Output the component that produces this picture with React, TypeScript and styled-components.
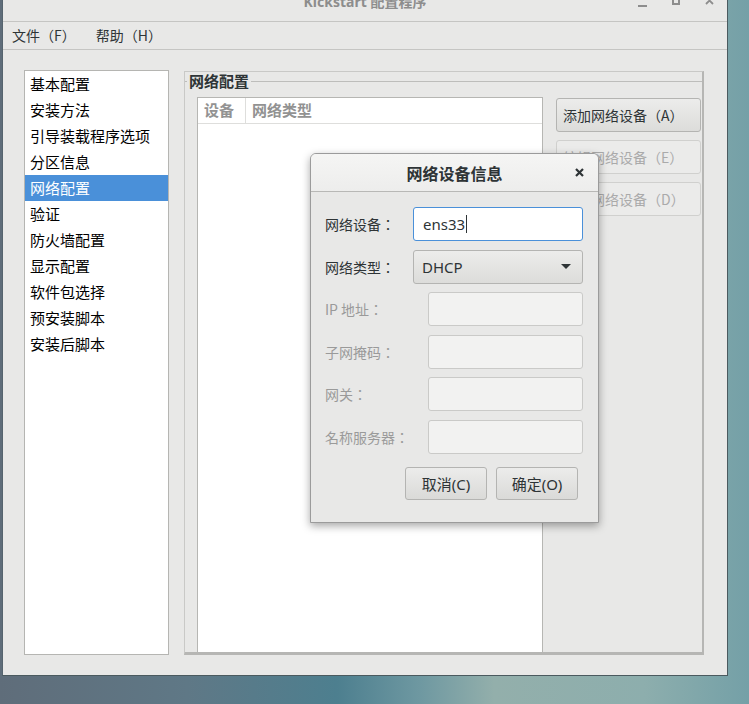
import styled, { createGlobalStyle } from "styled-components";

const GlobalStyle = createGlobalStyle`
  html, body {
    margin: 0;
    padding: 0;
  }
  body {
    font-family: "Noto Sans", "Noto Sans CJK SC", sans-serif;
    color: #2e3436;
  }
`;

const Desktop = styled.div`
  position: relative;
  width: 749px;
  height: 704px;
  overflow: hidden;
  box-sizing: border-box;
  padding-left: 2px;
  background: linear-gradient(
    90deg,
    #5f6d7a 0%,
    #5f7886 25%,
    #4d7f8f 45%,
    #6e98a1 56%,
    #93afab 66%,
    #8daead 86%,
    #74a0a7 100%
  );
`;

const Window = styled.div`
  width: 726px;
  height: 676px;
  box-sizing: border-box;
  background: #e8e8e7;
  border-left: 1px solid #56646e;
  border-right: 1px solid #4b5a5f;
  border-bottom: 1px solid #4b5a5f;
  display: flex;
  flex-direction: column;
`;

const TitleBar = styled.div`
  height: 21px;
  flex: none;
  border-bottom: 1px solid #c5c5c3;
  display: grid;
  grid-template-columns: 1fr auto 1fr;
  overflow: hidden;
`;

const TitleText = styled.span`
  grid-column: 2;
  margin-top: -6px;
  font-size: 14px;
  font-weight: 700;
  line-height: 16px;
  color: #8d8d8d;
`;

const Controls = styled.div`
  grid-column: 3;
  justify-self: end;
  display: flex;
  align-items: flex-start;
  gap: 25px;
  padding-right: 13px;
  svg {
    display: block;
  }
`;

const MenuBar = styled.div`
  height: 27px;
  flex: none;
  border-bottom: 1px solid #c5c5c3;
  display: flex;
  align-items: center;
  gap: 20px;
  padding-left: 9px;
`;

const MenuItem = styled.span`
  font-family: "Noto Sans CJK TC", "Noto Sans CJK SC", sans-serif;
  font-size: 14px;
  line-height: 18px;
  margin-top: -2px;
  color: #2e3436;
`;

const Content = styled.div`
  flex: 1;
  display: flex;
  gap: 15px;
  padding: 20px 23px 20px 21px;
  min-height: 0;
`;

const Sidebar = styled.ul`
  list-style: none;
  margin: 0;
  padding: 0;
  width: 145px;
  flex: none;
  box-sizing: border-box;
  background: #fff;
  border: 1px solid #b5b5b2;
`;

const SideItem = styled.li<{ $active?: boolean }>`
  height: 26px;
  line-height: 25px;
  padding-left: 5px;
  font-family: "Noto Sans CJK SC", sans-serif;
  font-size: 15px;
  color: ${(p) => (p.$active ? "#fff" : "#000")};
  background: ${(p) => (p.$active ? "#4a90d9" : "transparent")};
  white-space: nowrap;
`;

const Panel = styled.div`
  flex: 1;
  margin-top: 1px;
  display: flex;
  flex-direction: column;
  box-sizing: border-box;
  border-top: 1px solid #c9c9c7;
  border-left: 1px solid #c9c9c7;
  border-right: 2px solid #b6b6b4;
  border-bottom: 3px solid #b6b6b4;
`;

const Frame = styled.fieldset`
  flex: 1;
  margin: 0;
  padding: 0;
  min-width: 0;
  border: none;
  border-top: 1px solid #bdbdbb;
  display: flex;
  flex-direction: column;
`;

const FrameLabel = styled.legend`
  margin-left: 2px;
  padding: 0 2px;
  font-family: "Noto Sans CJK SC", sans-serif;
  font-size: 15px;
  font-weight: 700;
  line-height: 18px;
  color: #2e3436;
`;

const FrameBody = styled.div`
  flex: 1;
  display: flex;
  margin-top: 7px;
  padding-left: 12px;
`;

const Table = styled.div`
  width: 346px;
  flex: none;
  box-sizing: border-box;
  background: #fff;
  border: 1px solid #b6b6b3;
  border-bottom: none;
`;

const TableHead = styled.div`
  display: flex;
  height: 25px;
  border-bottom: 1px solid #dededc;
`;

const HeadCell = styled.div<{ $width?: number }>`
  ${(p) => (p.$width ? `width: ${p.$width}px; flex: none;` : "flex: 1;")}
  box-sizing: border-box;
  padding-left: 6px;
  line-height: 24px;
  font-family: "Noto Sans CJK SC", sans-serif;
  font-size: 15px;
  font-weight: 700;
  color: #929292;
  & + & {
    border-left: 1px solid #dededc;
  }
`;

const ButtonColumn = styled.div`
  flex: 1;
  display: flex;
  flex-direction: column;
  gap: 8px;
  padding: 1px 1px 0 13px;
`;

const SideButton = styled.button<{ $disabled?: boolean }>`
  height: 34px;
  box-sizing: border-box;
  padding: 0 0 0 6px;
  text-align: left;
  font-family: "Noto Sans CJK TC", "Noto Sans CJK SC", sans-serif;
  font-size: 14px;
  border-radius: 3px;
  color: ${(p) => (p.$disabled ? "#aaaaaa" : "#2e3436")};
  border: 1px solid ${(p) => (p.$disabled ? "#d0d0ce" : "#b4b4b2")};
  background: ${(p) =>
    p.$disabled ? "#ebebea" : "linear-gradient(#ececeb, #dcdcda)"};
`;

const Dialog = styled.div`
  position: absolute;
  left: 310px;
  top: 153px;
  width: 289px;
  height: 370px;
  box-sizing: border-box;
  background: #e8e8e7;
  border: 1px solid #9b9b9b;
  border-radius: 6px 6px 0 0;
  box-shadow: 0 3px 8px rgba(0, 0, 0, 0.35);
  display: flex;
  flex-direction: column;
`;

const DialogHeader = styled.div`
  height: 37px;
  flex: none;
  display: grid;
  grid-template-columns: 1fr auto 1fr;
  align-items: center;
  border-radius: 5px 5px 0 0;
  background: linear-gradient(#f5f5f4, #ededec);
  border-bottom: 1px solid #b8b8b6;
`;

const DialogTitle = styled.span`
  grid-column: 2;
  font-family: "Noto Sans CJK SC", sans-serif;
  font-size: 16px;
  font-weight: 700;
  color: #2e3436;
`;

const CloseButton = styled.span`
  grid-column: 3;
  justify-self: end;
  padding-right: 14px;
  display: flex;
`;

const DialogBody = styled.div`
  padding: 15px 15px 0 14px;
  display: flex;
  flex-direction: column;
  gap: 8.6px;
`;

const FieldRow = styled.div`
  height: 34px;
  display: flex;
  align-items: center;
  justify-content: space-between;
`;

const FieldLabel = styled.span<{ $disabled?: boolean }>`
  font-family: "Noto Sans CJK TC", "Noto Sans CJK SC", sans-serif;
  font-size: 14px;
  color: ${(p) => (p.$disabled ? "#9a9a9a" : "#2e3436")};
`;

const Entry = styled.div<{ $width: number; $focused?: boolean; $disabled?: boolean }>`
  width: ${(p) => p.$width}px;
  height: 34px;
  box-sizing: border-box;
  display: flex;
  align-items: center;
  padding-left: 9px;
  border-radius: 3px;
  font-size: 15px;
  color: #2e3436;
  border: 1px solid
    ${(p) => (p.$focused ? "#4a90d9" : p.$disabled ? "#cacac8" : "#b4b4b2")};
  background: ${(p) => (p.$disabled ? "#f2f2f1" : "#fff")};
`;

const Caret = styled.span`
  display: inline-block;
  width: 1px;
  height: 18px;
  margin-left: 1px;
  background: #2e3436;
`;

const Combo = styled.div<{ $width: number }>`
  width: ${(p) => p.$width}px;
  height: 34px;
  box-sizing: border-box;
  display: flex;
  align-items: center;
  justify-content: space-between;
  padding: 0 11px 0 8px;
  border-radius: 3px;
  font-size: 15px;
  color: #2e3436;
  border: 1px solid #b4b4b2;
  background: linear-gradient(#ececeb, #dcdcda);
`;

const ButtonRow = styled.div`
  display: flex;
  justify-content: flex-end;
  gap: 9px;
  margin-top: 4px;
  padding-right: 5px;
`;

const DialogButton = styled.button`
  width: 82px;
  height: 33px;
  box-sizing: border-box;
  border-radius: 3px;
  font-family: "Noto Sans", "Noto Sans CJK SC", sans-serif;
  font-size: 15px;
  color: #2e3436;
  border: 1px solid #b4b4b2;
  background: linear-gradient(#ececeb, #dadad8);
`;

const sideItems = [
  "基本配置",
  "安装方法",
  "引导装载程序选项",
  "分区信息",
  "网络配置",
  "验证",
  "防火墙配置",
  "显示配置",
  "软件包选择",
  "预安装脚本",
  "安装后脚本",
];

const disabledFields = ["IP 地址：", "子网掩码：", "网关：", "名称服务器："];

export default function App() {
  return (
    <>
      <GlobalStyle />
      <Desktop>
        <Window>
          <TitleBar>
            <TitleText>Kickstart 配置程序</TitleText>
            <Controls>
              <svg width="9" height="8" viewBox="0 0 9 8">
                <rect x="0" y="5" width="9" height="2" fill="#8d8d8d" />
              </svg>
              <svg width="8" height="7" viewBox="0 0 8 7" style={{ marginTop: -1 }}>
                <rect x="1" y="-2" width="6" height="7" fill="none" stroke="#8d8d8d" strokeWidth="2" />
              </svg>
              <svg width="9" height="7" viewBox="0 0 9 7" style={{ marginTop: -1 }}>
                <path d="M1 -2 L8 5 M8 -2 L1 5" stroke="#8d8d8d" strokeWidth="1.8" />
              </svg>
            </Controls>
          </TitleBar>
          <MenuBar>
            <MenuItem>文件（F）</MenuItem>
            <MenuItem>帮助（H）</MenuItem>
          </MenuBar>
          <Content>
            <Sidebar>
              {sideItems.map((item) => (
                <SideItem key={item} $active={item === "网络配置"}>
                  {item}
                </SideItem>
              ))}
            </Sidebar>
            <Panel>
              <Frame>
                <FrameLabel>网络配置</FrameLabel>
                <FrameBody>
                  <Table>
                    <TableHead>
                      <HeadCell $width={47}>设备</HeadCell>
                      <HeadCell>网络类型</HeadCell>
                    </TableHead>
                  </Table>
                  <ButtonColumn>
                    <SideButton>添加网络设备（A）</SideButton>
                    <SideButton $disabled>编辑网络设备（E）</SideButton>
                    <SideButton $disabled>删除网络设备（D）</SideButton>
                  </ButtonColumn>
                </FrameBody>
              </Frame>
            </Panel>
          </Content>
        </Window>

        <Dialog>
          <DialogHeader>
            <DialogTitle>网络设备信息</DialogTitle>
            <CloseButton>
              <svg width="9" height="9" viewBox="0 0 9 9">
                <path d="M1 1 L8 8 M8 1 L1 8" stroke="#2e3436" strokeWidth="2.2" />
              </svg>
            </CloseButton>
          </DialogHeader>
          <DialogBody>
            <FieldRow>
              <FieldLabel>网络设备：</FieldLabel>
              <Entry $width={170} $focused>
                ens33
                <Caret />
              </Entry>
            </FieldRow>
            <FieldRow>
              <FieldLabel>网络类型：</FieldLabel>
              <Combo $width={170}>
                DHCP
                <svg width="10" height="5" viewBox="0 0 10 5">
                  <path d="M0 0 H10 L5 5 Z" fill="#2e3436" />
                </svg>
              </Combo>
            </FieldRow>
            {disabledFields.map((label) => (
              <FieldRow key={label}>
                <FieldLabel $disabled>{label}</FieldLabel>
                <Entry $width={155} $disabled />
              </FieldRow>
            ))}
            <ButtonRow>
              <DialogButton>取消(C)</DialogButton>
              <DialogButton>确定(O)</DialogButton>
            </ButtonRow>
          </DialogBody>
        </Dialog>
      </Desktop>
    </>
  );
}
